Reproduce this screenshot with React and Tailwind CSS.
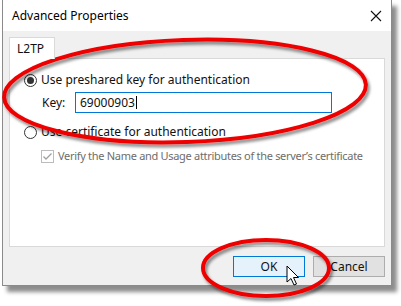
function Radio({ checked }) {
  return (
    <span className="flex h-[13px] w-[13px] shrink-0 items-center justify-center rounded-full border border-[#333] bg-white">
      {checked && <span className="h-[7px] w-[7px] rounded-full bg-[#333]" />}
    </span>
  );
}

function Annotations() {
  return (
    <svg className="pointer-events-none absolute left-0 top-0" width="401" height="306" viewBox="0 0 401 306">
      <defs>
        <filter id="shadow" x="-10%" y="-10%" width="120%" height="130%">
          <feDropShadow dx="2" dy="3" stdDeviation="1.6" floodColor="#000" floodOpacity="0.45" />
        </filter>
      </defs>
      <g filter="url(#shadow)" fill="none" stroke="#ee0000" strokeWidth="4">
        <ellipse cx="185" cy="91" rx="181" ry="51" transform="rotate(-2 185 91)" />
        <ellipse cx="266" cy="268" rx="63" ry="28" />
      </g>
      <path
        d="M287 266 L287 282 L291 278.5 L294 285 L296.5 284 L293.5 277.5 L298.5 277.5 Z"
        fill="#fff"
        stroke="#000"
        strokeWidth="1"
        strokeLinejoin="round"
      />
    </svg>
  );
}

export default function App() {
  return (
    <div className="relative h-[306px] w-[401px] overflow-hidden bg-white font-['Noto_Sans',sans-serif] text-[12px] text-[#111]">
      <div className="ml-[2px] flex h-[286px] w-[390px] flex-col border-x border-b border-[#8a8a8a] bg-[#f0f0f0] shadow-[5px_6px_4px_rgba(0,0,0,0.45)]">
        <div className="flex h-[31px] shrink-0 items-center justify-between bg-white pl-[9px] pr-[6px]">
          <span className="text-[12px] text-black">Advanced Properties</span>
          <svg width="12" height="12" viewBox="0 0 12 12" className="mr-[3px]">
            <path d="M1 1 L11 11 M11 1 L1 11" stroke="#111" strokeWidth="1.1" />
          </svg>
        </div>

        <div className="flex flex-1 flex-col px-[6px] pt-[6px]">
          <div className="flex">
            <div className="relative z-10 -mb-px flex h-[22px] w-[46px] items-center border-x border-t border-[#d9d9d9] bg-white pl-[7px] text-[12px]">
              L2TP
            </div>
          </div>
          <div className="flex h-[189px] flex-col border border-[#d9d9d9] bg-white pl-[14px] pt-[13px]">
            <div className="flex h-[16px] items-center gap-[4px]">
              <Radio checked />
              <span>Use preshared key for authentication</span>
            </div>
            <div className="mt-[4px] flex items-center">
              <span className="w-[33px] pl-[18px] box-content">Key:</span>
              <div className="flex h-[21px] w-[257px] items-center border border-[#0078d7] pl-[4px]">
                <span>69000903</span>
                <span className="ml-px h-[13px] w-px bg-black" />
              </div>
            </div>
            <div className="mt-[11px] flex h-[16px] items-center gap-[4px]">
              <Radio />
              <span>Use certificate for authentication</span>
            </div>
            <div className="mt-[8px] flex h-[16px] items-center gap-[4px] pl-[17px] text-[#6d6d6d]">
              <span className="flex h-[13px] w-[13px] shrink-0 items-center justify-center border border-[#bcbcbc] bg-white">
                <svg width="11" height="11" viewBox="0 0 11 11">
                  <path d="M1.5 5.5 L4 8 L9.5 2.5" fill="none" stroke="#a0a0a0" strokeWidth="1.3" />
                </svg>
              </span>
              <span className="whitespace-nowrap text-[11px] tracking-[-0.3px]">
                Verify the Name and Usage attributes of the server’s certificate
              </span>
            </div>
          </div>

          <div className="mt-[9px] flex justify-end gap-[8px]">
            <button className="flex h-[21px] w-[72px] items-center justify-center border border-[#0078d7] bg-[#e5f1fb] text-[12px]">
              OK
            </button>
            <button className="flex h-[21px] w-[72px] items-center justify-center border border-[#adadad] bg-[#e1e1e1] text-[12px]">
              Cancel
            </button>
          </div>
        </div>
      </div>
      <Annotations />
    </div>
  );
}
